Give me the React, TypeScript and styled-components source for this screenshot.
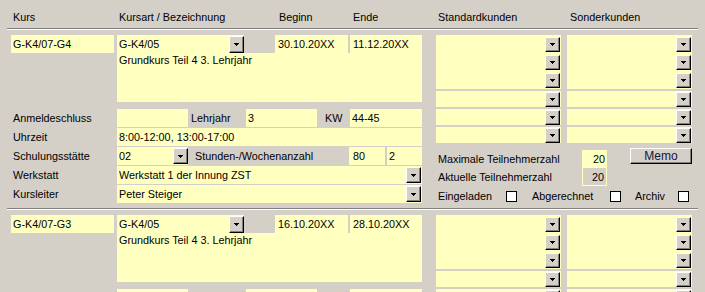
import React from 'react';
import styled, { createGlobalStyle } from 'styled-components';

const Y = '#ffffc0';
const G = '#d4d0c8';

const Global = createGlobalStyle`
  html, body { margin: 0; padding: 0; background: ${G}; }
  body {
    font-family: "Liberation Sans", Arial, sans-serif;
    font-size: 10.8px;
    color: #000;
    width: 705px;
    height: 292px;
    overflow: hidden;
  }
`;

const Page = styled.div`
  padding-left: 7px;
  width: 691px;
`;

const COLS = '103px 3px 127px 31px 73px 2px 72px 14px 125px 6px 125px';

const Header = styled.div`
  display: grid;
  grid-template-columns: ${COLS};
  padding: 8px 0 2px 4px;
  height: 18px;
  line-height: 18px;
`;

const HeadCell = styled.div<{ $col: number; $pl?: number }>`
  grid-column: ${(p) => p.$col};
  padding-left: ${(p) => p.$pl ?? 2}px;
  white-space: nowrap;
`;

const Rule = styled.div`
  height: 1px;
  background: #808080;
  border-bottom: 1px solid #fff;
`;

const Record = styled.div`
  box-sizing: border-box;
  height: 178px;
  padding: 5px 0 0 4px;
  display: grid;
  grid-template-columns: 411px 14px 256px;
  align-items: start;
`;

const LeftPane = styled.div`
  grid-column: 1;
  display: flex;
  flex-direction: column;
`;

const TopGrid = styled.div`
  display: grid;
  grid-template-columns: 103px 3px 127px 31px 73px 2px 72px;
  grid-template-rows: 18px 49px;
`;

const Field = styled.div<{ $col?: string; $pl?: number; $right?: boolean; $muted?: boolean }>`
  grid-column: ${(p) => p.$col ?? 'auto'};
  box-sizing: border-box;
  height: 18px;
  background: ${(p) => (p.$muted ? G : Y)};
  border: ${(p) => (p.$muted ? `1px solid ${Y}` : 'none')};
  border-top: none;
  display: flex;
  align-items: center;
  justify-content: ${(p) => (p.$right ? 'flex-end' : 'flex-start')};
  padding-left: ${(p) => p.$pl ?? 2}px;
  padding-right: ${(p) => (p.$right ? 2 : 0)}px;
  line-height: 18px;
  white-space: nowrap;
  overflow: hidden;
`;

const FieldText = styled.span`
  flex: 1;
  overflow: hidden;
`;

const Desc = styled.div`
  grid-column: 3 / 8;
  grid-row: 2;
  background: ${Y};
  padding: 1px 0 0 2px;
  line-height: 13px;
`;

const LowerGrid = styled.div`
  margin-top: 7px;
  display: grid;
  grid-template-columns: 106px 305px;
  grid-auto-rows: 18px;
  row-gap: 1px;
`;

const Label = styled.div<{ $pl?: number }>`
  padding-left: ${(p) => p.$pl ?? 2}px;
  line-height: 18px;
  white-space: nowrap;
`;

const FieldRow = styled.div<{ $cols: string }>`
  display: grid;
  grid-template-columns: ${(p) => p.$cols};
  height: 18px;
`;

const Gap = styled.div``;

const DropBtn = styled.span<{ $h?: number; $mr?: number }>`
  box-sizing: border-box;
  flex: none;
  width: 15px;
  height: ${(p) => p.$h ?? 16}px;
  margin-right: ${(p) => p.$mr ?? 1}px;
  display: flex;
  align-items: center;
  justify-content: center;
  background: ${G};
  border: 1px solid;
  border-color: #fff #000 #000 #fff;
  box-shadow: inset -1px -1px #808080;
  padding-top: 1px;
`;

const Arrow = () => (
  <svg width="5" height="3" viewBox="0 0 5 3" shapeRendering="crispEdges">
    <rect x="0" y="0" width="5" height="1" fill="#000" />
    <rect x="1" y="1" width="3" height="1" fill="#000" />
    <rect x="2" y="2" width="1" height="1" fill="#000" />
  </svg>
);

const Drop: React.FC<{ h?: number; mr?: number }> = ({ h, mr }) => (
  <DropBtn $h={h} $mr={mr}>
    <Arrow />
  </DropBtn>
);

const RightPane = styled.div`
  grid-column: 3;
  display: flex;
  flex-direction: column;
`;

const Lists = styled.div`
  display: grid;
  grid-template-columns: 125px 125px;
  column-gap: 6px;
`;

const List = styled.div`
  display: flex;
  flex-direction: column;
`;

const ListRow = styled.div<{ $sep?: boolean }>`
  box-sizing: border-box;
  height: 18px;
  background: ${Y};
  border-top: ${(p) => (p.$sep ? `2px solid ${G}` : 'none')};
  display: flex;
  align-items: center;
  justify-content: flex-end;
`;

const ParamGrid = styled.div`
  margin-top: 7px;
  display: grid;
  grid-template-columns: 146px 25px 23px 62px;
  grid-template-rows: 18px 18px;
`;

const MemoButton = styled.button`
  grid-column: 4;
  grid-row: 1;
  align-self: start;
  margin-top: -2px;
  box-sizing: border-box;
  height: 16px;
  padding: 0;
  background: ${G};
  border: 1px solid;
  border-color: #fff #000 #000 #fff;
  box-shadow: inset -1px -1px #808080;
  font-family: "Liberation Sans", Arial, sans-serif;
  font-size: 12px;
  line-height: 13px;
  color: #14143c;
`;

const CheckRow = styled.div`
  margin-top: 3px;
  height: 14px;
  display: flex;
  align-items: center;
`;

const CheckLabel = styled.div<{ $w: number; $ml?: number; $pl?: number }>`
  width: ${(p) => p.$w}px;
  margin-left: ${(p) => p.$ml ?? 0}px;
  padding-left: ${(p) => p.$pl ?? 0}px;
  box-sizing: border-box;
  white-space: nowrap;
  line-height: 14px;
`;

const CheckBox = styled.span`
  box-sizing: border-box;
  width: 11px;
  height: 11px;
  background: #fff;
  border: 1px solid #000;
  flex: none;
`;

type Rec = {
  kurs: string;
  kursart: string;
  beginn: string;
  ende: string;
  desc: string;
  anmeldeschluss: string;
  lehrjahr: string;
  kw: string;
  uhrzeit: string;
  schul: string;
  stunden: string;
  wochen: string;
  werkstatt: string;
  kursleiter: string;
  max: string;
  akt: string;
};

const records: Rec[] = [
  {
    kurs: 'G-K4/07-G4',
    kursart: 'G-K4/05',
    beginn: '30.10.20XX',
    ende: '11.12.20XX',
    desc: 'Grundkurs Teil 4 3. Lehrjahr',
    anmeldeschluss: '',
    lehrjahr: '3',
    kw: '44-45',
    uhrzeit: '8:00-12:00, 13:00-17:00',
    schul: '02',
    stunden: '80',
    wochen: '2',
    werkstatt: 'Werkstatt 1 der Innung ZST',
    kursleiter: 'Peter Steiger',
    max: '20',
    akt: '20',
  },
  {
    kurs: 'G-K4/07-G3',
    kursart: 'G-K4/05',
    beginn: '16.10.20XX',
    ende: '28.10.20XX',
    desc: 'Grundkurs Teil 4 3. Lehrjahr',
    anmeldeschluss: '',
    lehrjahr: '3',
    kw: '42-43',
    uhrzeit: '8:00-12:00, 13:00-17:00',
    schul: '02',
    stunden: '80',
    wochen: '2',
    werkstatt: 'Werkstatt 1 der Innung ZST',
    kursleiter: 'Peter Steiger',
    max: '20',
    akt: '20',
  },
];

const CustomerList = () => (
  <List>
    <ListRow><Drop h={15} mr={1} /></ListRow>
    <ListRow><Drop h={15} mr={1} /></ListRow>
    <ListRow><Drop h={15} mr={1} /></ListRow>
    <ListRow $sep><Drop h={15} mr={1} /></ListRow>
    <ListRow $sep><Drop h={15} mr={1} /></ListRow>
    <ListRow $sep><Drop h={15} mr={1} /></ListRow>
  </List>
);

const RecordView: React.FC<{ r: Rec }> = ({ r }) => (
  <Record>
    <LeftPane>
      <TopGrid>
        <Field $col="1">{r.kurs}</Field>
        <Field $col="3">
          <FieldText>{r.kursart}</FieldText>
          <Drop h={17} mr={0} />
        </Field>
        <Field $col="5" $pl={3}>{r.beginn}</Field>
        <Field $col="7" $pl={3}>{r.ende}</Field>
        <Desc>{r.desc}</Desc>
      </TopGrid>
      <LowerGrid>
        <Label>Anmeldeschluss</Label>
        <FieldRow $cols="71px 58px 71px 33px 72px">
          <Field>{r.anmeldeschluss}</Field>
          <Label $pl={3}>Lehrjahr</Label>
          <Field>{r.lehrjahr}</Field>
          <Label $pl={8}>KW</Label>
          <Field>{r.kw}</Field>
        </FieldRow>
        <Label>Uhrzeit</Label>
        <FieldRow $cols="305px">
          <Field>{r.uhrzeit}</Field>
        </FieldRow>
        <Label>Schulungsstätte</Label>
        <FieldRow $cols="71px 161px 36px 2px 35px">
          <Field>
            <FieldText>{r.schul}</FieldText>
            <Drop mr={0} />
          </Field>
          <Label $pl={7}>Stunden-/Wochenanzahl</Label>
          <Field $pl={4}>{r.stunden}</Field>
          <Gap />
          <Field>{r.wochen}</Field>
        </FieldRow>
        <Label>Werkstatt</Label>
        <FieldRow $cols="305px">
          <Field>
            <FieldText>{r.werkstatt}</FieldText>
            <Drop />
          </Field>
        </FieldRow>
        <Label>Kursleiter</Label>
        <FieldRow $cols="305px">
          <Field>
            <FieldText>{r.kursleiter}</FieldText>
            <Drop />
          </Field>
        </FieldRow>
      </LowerGrid>
    </LeftPane>
    <RightPane>
      <Lists>
        <CustomerList />
        <CustomerList />
      </Lists>
      <ParamGrid>
        <Label>Maximale Teilnehmerzahl</Label>
        <Field $right>{r.max}</Field>
        <Gap />
        <MemoButton>Memo</MemoButton>
        <Label>Aktuelle Teilnehmerzahl</Label>
        <Field $right $muted>{r.akt}</Field>
      </ParamGrid>
      <CheckRow>
        <CheckLabel $w={70} $pl={2}>Eingeladen</CheckLabel>
        <CheckBox />
        <CheckLabel $w={78} $ml={15}>Abgerechnet</CheckLabel>
        <CheckBox />
        <CheckLabel $w={43} $ml={14}>Archiv</CheckLabel>
        <CheckBox />
      </CheckRow>
    </RightPane>
  </Record>
);

export default function App() {
  return (
    <Page>
      <Global />
      <Header>
        <HeadCell $col={1}>Kurs</HeadCell>
        <HeadCell $col={3}>Kursart / Bezeichnung</HeadCell>
        <HeadCell $col={5} $pl={4}>Beginn</HeadCell>
        <HeadCell $col={7} $pl={3}>Ende</HeadCell>
        <HeadCell $col={9}>Standardkunden</HeadCell>
        <HeadCell $col={11} $pl={3}>Sonderkunden</HeadCell>
      </Header>
      <Rule />
      {records.map((r, i) => (
        <React.Fragment key={r.kurs}>
          <RecordView r={r} />
          {i < records.length - 1 && <Rule />}
        </React.Fragment>
      ))}
    </Page>
  );
}
